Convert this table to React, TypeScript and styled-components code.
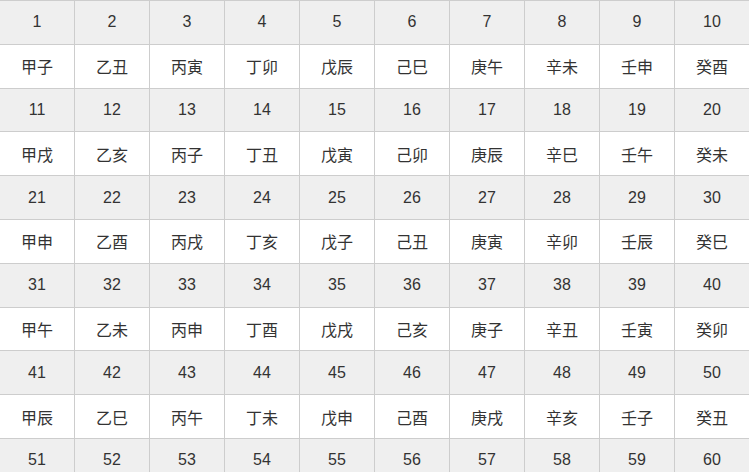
import styled, { createGlobalStyle } from 'styled-components'

const GlobalStyle = createGlobalStyle`
  html, body {
    margin: 0;
    padding: 0;
    background: #ffffff;
    overflow: hidden;
  }
`

const Page = styled.div`
  width: 749px;
  height: 472px;
  overflow: hidden;
`

const Table = styled.table`
  border-collapse: collapse;
  table-layout: fixed;
  width: 751px;
  margin-left: -1px;
  font-family: 'Liberation Sans', Arial, 'Noto Sans CJK SC', sans-serif;
  color: #333333;
`

const Row = styled.tr<{ $shade: boolean }>`
  height: 43.8px;
  background: ${(p) => (p.$shade ? '#efefef' : '#ffffff')};
`

const Cell = styled.td<{ $han?: boolean }>`
  border: 1px solid #cdcdcd;
  padding: 0;
  text-align: center;
  vertical-align: middle;
  font-size: 16px;
  font-family: ${(p) =>
    p.$han
      ? "'Noto Sans CJK SC', 'Liberation Sans', sans-serif"
      : "'Liberation Sans', Arial, sans-serif"};
`

const stems = ['甲', '乙', '丙', '丁', '戊', '己', '庚', '辛', '壬', '癸']
const branches = ['子', '丑', '寅', '卯', '辰', '巳', '午', '未', '申', '酉', '戌', '亥']

const cycle = Array.from({ length: 60 }, (_, i) => stems[i % 10] + branches[i % 12])

export default function App() {
  const rows = []
  for (let r = 0; r < 6; r++) {
    const nums = Array.from({ length: 10 }, (_, c) => r * 10 + c + 1)
    rows.push(
      <Row key={`n${r}`} $shade>
        {nums.map((n) => (
          <Cell key={n}>{n}</Cell>
        ))}
      </Row>
    )
    if (r < 5) {
      rows.push(
        <Row key={`h${r}`} $shade={false}>
          {nums.map((n) => (
            <Cell key={n} $han>
              {cycle[n - 1]}
            </Cell>
          ))}
        </Row>
      )
    }
  }

  return (
    <Page>
      <GlobalStyle />
      <Table>
        <tbody>{rows}</tbody>
      </Table>
    </Page>
  )
}
